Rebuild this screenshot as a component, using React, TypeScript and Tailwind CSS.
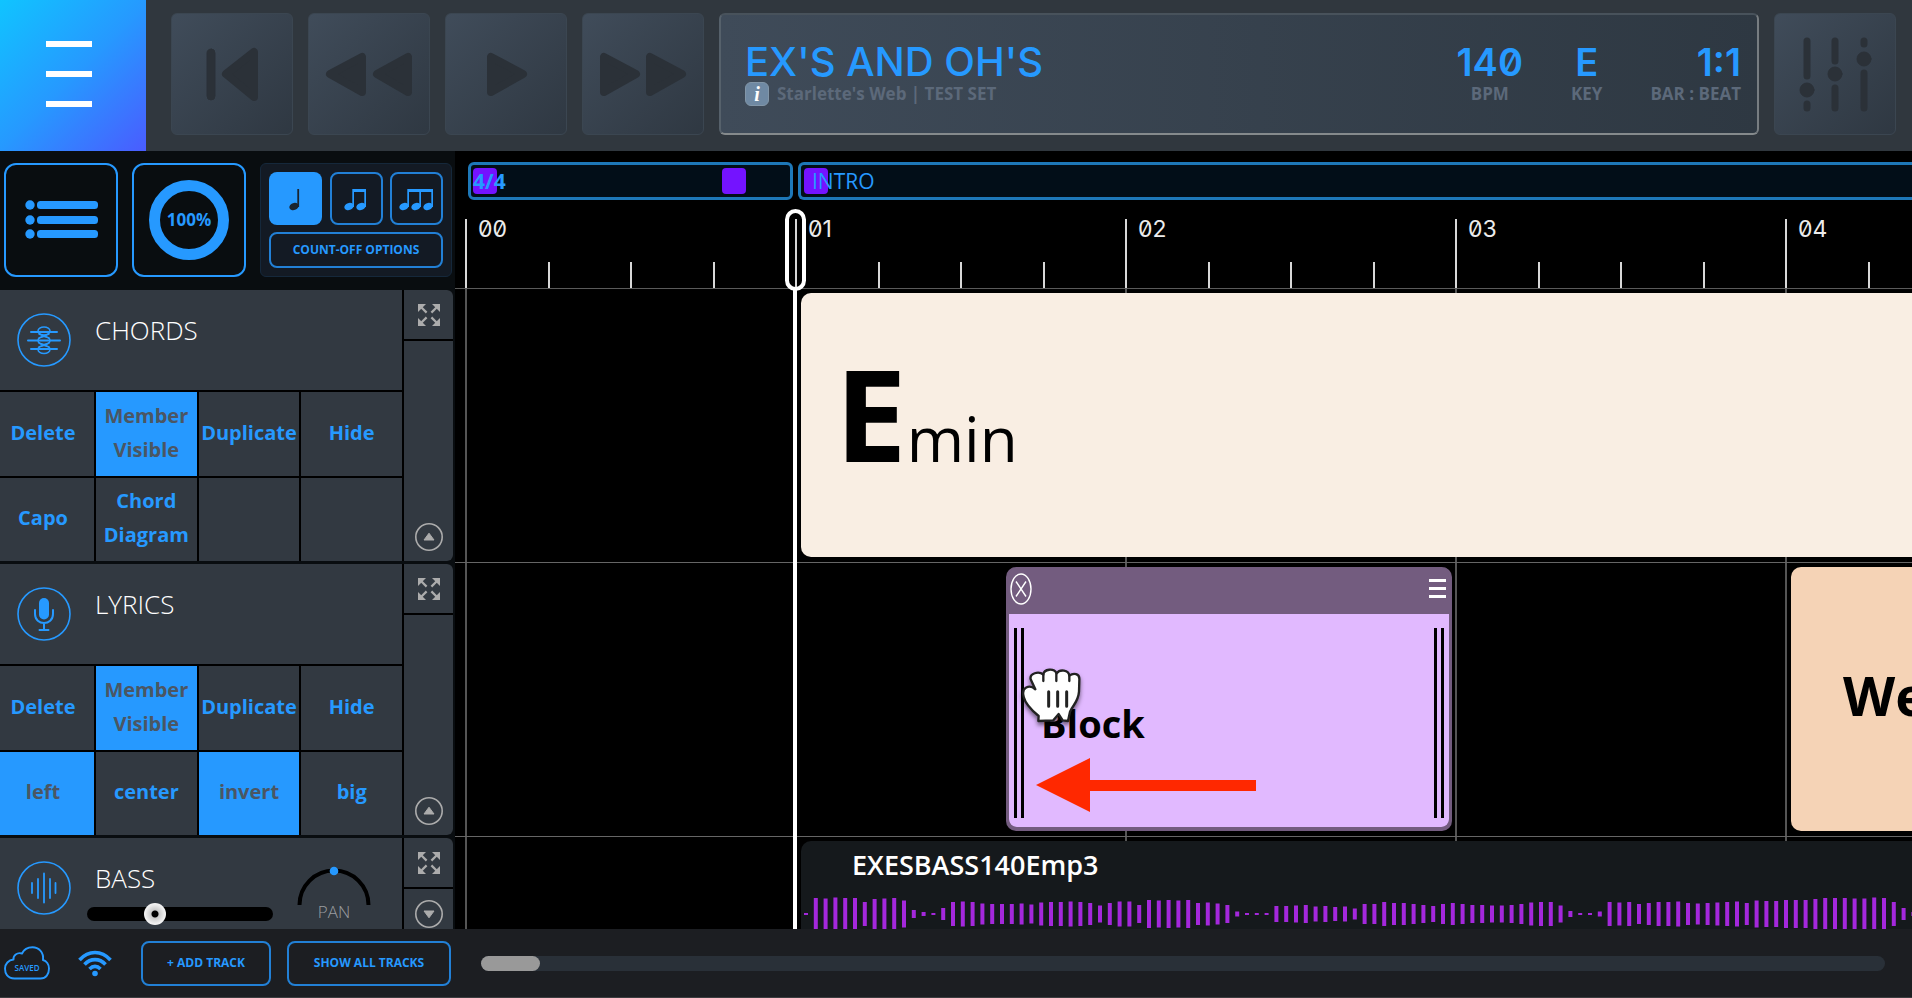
import type { ReactNode } from "react";

const BLUE = "#2699ff";

const wave = [
  2, 32, 31, 33, 32, 32, 24, 30, 31, 32, 27, 8, 4, 2, 12, 24, 25, 24, 21, 20, 20, 20, 21, 19, 23, 24, 24, 25, 24, 22,
  17, 22, 25, 25, 18, 28, 27, 28, 27, 28, 22, 23, 21, 18, 5, 2, 2, 2, 16, 16, 17, 18, 15, 16, 14, 15, 11, 20, 20, 24,
  22, 22, 20, 18, 16, 20, 22, 20, 18, 18, 17, 17, 18, 20, 23, 24, 24, 17, 6, 2, 2, 5, 24, 23, 24, 20, 22, 24, 24, 25,
  22, 21, 22, 23, 24, 25, 22, 27, 26, 26, 28, 28, 28, 30, 32, 32, 32, 31, 31, 33, 32, 24, 12, 4,
];

function TransportButton({ label, children }: { label: string; children: ReactNode }) {
  return (
    <button
      aria-label={label}
      className="size-[122px] shrink-0 rounded-md border border-[#3b4651] bg-linear-to-br from-[#404c5a] to-[#2f3842]"
    >
      <svg viewBox="1 1 120 120" className="size-full" fill="#2b3138" stroke="#2b3138" strokeLinejoin="round" strokeLinecap="round">
        {children}
      </svg>
    </button>
  );
}

function Header() {
  return (
    <header className="flex h-[151px] shrink-0 bg-[#30373e] pr-4">
      <button
        aria-label="Menu"
        className="flex h-full w-[146px] shrink-0 flex-col items-center justify-center gap-6 bg-linear-[135deg] from-[#10c4ff] via-[#2699ff] to-[#4a5cff] pr-2 pb-[3px]"
      >
        <span className="h-[6px] w-[46px] bg-white" />
        <span className="h-[6px] w-[46px] bg-white" />
        <span className="h-[6px] w-[46px] bg-white" />
      </button>
      <div className="flex min-w-0 flex-1 items-start pt-[13px] pl-[25px]">
        <div className="flex gap-[15px]">
          <TransportButton label="Back to start">
            <rect x="36" y="36" width="8" height="51" rx="4" />
            <path strokeWidth="8" d="M55 61 L83 39 V84 Z" />
          </TransportButton>
          <TransportButton label="Rewind">
            <path strokeWidth="8" d="M22 61 L54 44 V79 Z M69 61 L100 44 V79 Z" />
          </TransportButton>
          <TransportButton label="Play">
            <path strokeWidth="8" d="M78 61 L46 44 V79 Z" />
          </TransportButton>
          <TransportButton label="Fast forward">
            <path strokeWidth="8" d="M54 61 L22 44 V79 Z M100 61 L68 44 V79 Z" />
          </TransportButton>
        </div>
        <section className="mx-[15px] flex h-[122px] min-w-0 flex-1 items-center justify-between rounded-md border-2 border-t-[#48525b] border-r-[#777d81] border-b-[#858a8c] border-l-[#56616b] bg-linear-to-r from-[#3f4b59] to-[#2e3842] pr-4 pl-6">
          <div>
            <h1 className="font-['Inter'] text-[40px] leading-10 font-medium text-[#2699ff] slashed-zero">EX'S AND OH'S</h1>
            <div className="flex items-center gap-2">
              <span className="flex size-6 items-center justify-center rounded-md border border-[#8296a8] bg-[#6f89a3] font-['Liberation_Serif'] text-[20px] leading-5 font-bold text-white italic">
                i
              </span>
              <p className="text-[17px] leading-6 font-bold text-[#5c697a]">Starlette's Web | TEST SET</p>
            </div>
          </div>
          <dl className="flex gap-[48px] text-center">
            <Readout label="BPM" value="140" />
            <Readout label="KEY" value="E" />
            <Readout label="BAR : BEAT" value="1:1" end />
          </dl>
        </section>
        <TransportButton label="Mixer">
          <path
            strokeWidth="7"
            d="M33 28 V63 M33 91 V95 M61 28 V48 M61 75 V95 M90 28 V31 M90 60 V95"
          />
          <circle cx="33" cy="77" r="7" />
          <circle cx="61" cy="61" r="7" />
          <circle cx="90" cy="46" r="7" />
        </TransportButton>
      </div>
    </header>
  );
}

function Readout({ label, value, end }: { label: string; value: string; end?: boolean }) {
  return (
    <div className={end ? "flex flex-col-reverse text-right" : "flex flex-col-reverse"}>
      <dt className="text-[17px] leading-6 font-bold text-[#5c697a]">{label}</dt>
      <dd className="font-['Inter'] text-[38px] leading-10 font-semibold text-[#2699ff] slashed-zero">{value}</dd>
    </div>
  );
}

function Tools() {
  return (
    <div className="flex h-[139px] shrink-0 items-start gap-[14px] pt-3 pl-1">
      <button aria-label="Set list" className="size-[114px] rounded-xl border-2 border-[#2699ff]">
        <svg viewBox="2 2 110 110" className="size-full" fill={BLUE}>
          {[42, 57, 71].map((y) => (
            <g key={y}>
              <circle cx="26" cy={y} r="4.7" />
              <rect x="33" y={y - 4} width="61" height="8" rx="3.5" />
            </g>
          ))}
        </svg>
      </button>
      <button className="flex size-[114px] items-center justify-center rounded-xl border-2 border-[#2699ff]">
        <span className="flex size-20 items-center justify-center rounded-full border-[11px] border-[#2699ff] text-[17px] font-bold text-[#2699ff]">
          100%
        </span>
      </button>
      <div className="flex h-[114px] w-[192px] flex-col gap-[7px] rounded-md border border-[#15283b] bg-[#131a24] px-2 pt-2">
        <div className="flex justify-between">
          <button aria-label="Quarter notes" className="size-[53px] rounded-lg bg-[#2699ff]">
            <svg viewBox="0 0 53 53" className="size-full" fill="#1a2430">
              <NoteHead x={25} />
              <rect x="28.3" y="17" width="1.8" height="18" />
            </svg>
          </button>
          <button aria-label="Eighth notes" className="size-[53px] rounded-lg border-2 border-[#2280d6]">
            <svg viewBox="2 2 49 49" className="size-full" fill={BLUE}>
              <NoteHead x={19} />
              <NoteHead x={31} />
              <path d="M22.3 17 H36 V35 H34.3 V20 H24 V35 H22.3 Z" />
            </svg>
          </button>
          <button aria-label="Triplets" className="size-[53px] rounded-lg border-2 border-[#2280d6]">
            <svg viewBox="2 2 49 49" className="size-full" fill={BLUE}>
              <NoteHead x={14} />
              <NoteHead x={26} />
              <NoteHead x={38} />
              <path d="M17.3 17 H43 V35 H41.3 V20 H31 V35 H29.3 V20 H19 V35 H17.3 Z" />
            </svg>
          </button>
        </div>
        <button className="h-9 rounded-lg border-2 border-[#2280d6] text-[12px] font-bold text-[#2699ff]">COUNT-OFF OPTIONS</button>
      </div>
    </div>
  );
}

function NoteHead({ x }: { x: number }) {
  return <ellipse cx={x} cy="34.5" rx="4.8" ry="3.5" transform={`rotate(-18 ${x} 34.5)`} />;
}

function ExpandButton() {
  return (
    <button aria-label="Expand track" className="flex h-[49px] shrink-0 items-center justify-center bg-[#323941]">
      <svg viewBox="0 0 22 22" className="size-[22px]" fill="#acacac" stroke="#acacac">
        {[0, 90, 180, 270].map((a) => (
          <g key={a} transform={`rotate(${a} 11 11)`}>
            <path stroke="none" d="M0 0 H8 L0 8 Z" />
            <path strokeWidth="2.2" d="M3 3 L8.6 8.6" />
          </g>
        ))}
      </svg>
    </button>
  );
}

function CollapseButton({ down }: { down?: boolean }) {
  return (
    <button aria-label={down ? "Open track" : "Close track"} className="flex items-center justify-center">
      <svg viewBox="0 0 28 28" className={down ? "size-7 rotate-180" : "size-7"} fill="none" stroke="#acacac">
        <circle cx="14" cy="14" r="13.2" strokeWidth="1.6" />
        <path fill="#acacac" strokeWidth="1" strokeLinejoin="round" d="M14 10.2 L19 17 H9 Z" />
      </svg>
    </button>
  );
}

function TrackIcon({ children }: { children: ReactNode }) {
  return (
    <svg viewBox="0 0 54 54" className="size-[54px] shrink-0" fill="none" stroke={BLUE} strokeLinecap="round">
      <circle cx="27" cy="27" r="26" strokeWidth="1.6" />
      {children}
    </svg>
  );
}

type Cell = { label: string; on?: boolean };

function Track({ name, icon, cells, controls }: { name: string; icon: ReactNode; cells: Cell[]; controls?: ReactNode }) {
  return (
    <section className="flex h-[271px] shrink-0 gap-[2px] overflow-hidden rounded-r-md bg-black">
      <div className="grid min-w-0 flex-1 grid-cols-[94px_1fr_1fr_1fr] grid-rows-[100px_1fr_1fr] gap-[2px]">
        <div className="col-span-4 flex gap-6 bg-[#323941] pl-[17px]">
          <div className="pt-[23px]">
            <TrackIcon>{icon}</TrackIcon>
          </div>
          <div className="min-w-0 flex-1 pt-6">
            <h2 className="text-[26px] leading-8 font-light text-white">{name}</h2>
            {controls}
          </div>
        </div>
        {cells.map((c, i) =>
          c.label ? (
            <button
              key={i}
              className={
                c.on
                  ? "bg-[#2699ff] pb-[2px] text-[20px] leading-[34px] font-bold text-[#4b5663] nth-[4n+2]:pr-2"
                  : "bg-[#323941] pb-[2px] text-[20px] leading-[34px] font-bold text-[#2699ff] nth-[4n+2]:pr-2"
              }
            >
              {c.label}
            </button>
          ) : (
            <div key={i} className="bg-[#323941]" />
          ),
        )}
      </div>
      <div className="flex w-[49px] flex-col gap-[2px]">
        <ExpandButton />
        <div className={controls ? "flex flex-1 items-start justify-center bg-[#323941] pt-[11px]" : "flex flex-1 items-end justify-center bg-[#323941] pb-[10px]"}>
          <CollapseButton down={!!controls} />
        </div>
      </div>
    </section>
  );
}

const chordCells: Cell[] = [
  { label: "Delete" },
  { label: "Member Visible", on: true },
  { label: "Duplicate" },
  { label: "Hide" },
  { label: "Capo" },
  { label: "Chord Diagram" },
  { label: "" },
  { label: "" },
];

const lyricCells: Cell[] = [
  { label: "Delete" },
  { label: "Member Visible", on: true },
  { label: "Duplicate" },
  { label: "Hide" },
  { label: "left", on: true },
  { label: "center" },
  { label: "invert", on: true },
  { label: "big" },
];

const emptyCells: Cell[] = Array.from({ length: 8 }, () => ({ label: "" }));

function Sidebar() {
  return (
    <aside className="flex w-[455px] shrink-0 flex-col overflow-hidden bg-[#090d10]">
      <Tools />
      <div className="flex flex-col gap-[3px] pr-[2px]">
        <Track
          name="CHORDS"
          cells={chordCells}
          icon={
            <g strokeWidth="2">
              <path d="M14 19 H40 M11 27.5 H43 M14 36 H40" />
              <ellipse cx="27" cy="18" rx="6" ry="4" strokeWidth="1.5" />
              <ellipse cx="27" cy="27.5" rx="6" ry="4" strokeWidth="1.5" />
              <ellipse cx="27" cy="36.5" rx="6" ry="4" strokeWidth="1.5" />
              <path strokeWidth="1.5" d="M22 21 L32 25 M32 21 L22 25 M22 30 L32 34 M32 30 L22 34" />
            </g>
          }
        />
        <Track
          name="LYRICS"
          cells={lyricCells}
          icon={
            <>
              <rect x="22" y="11" width="10" height="21.5" rx="5" fill={BLUE} stroke="none" />
              <path strokeWidth="2" d="M18 23 V27 C18 39 36 39 36 27 V23 M27 36 V42.5 M22.5 43 H31.5" />
            </>
          }
        />
        <Track
          name="BASS"
          cells={emptyCells}
          icon={<path strokeWidth="1.8" d="M15 22 V32 M21 18 V37 M27 12.5 V41.5 M33 18 V37 M38.5 22 V32" />}
          controls={
            <div className="flex gap-6">
              <input
                type="range"
                aria-label="Volume"
                defaultValue={35}
                className="mt-[13px] -ml-2 h-[14px] w-[186px] appearance-none rounded-full bg-black [&::-webkit-slider-thumb]:size-[22px] [&::-webkit-slider-thumb]:appearance-none [&::-webkit-slider-thumb]:rounded-full [&::-webkit-slider-thumb]:bg-[radial-gradient(circle,#000_3px,#c9c9c9_4px,#f2f2f2_10px)]"
              />
              <div className="-mt-7 flex flex-col items-center">
                <svg viewBox="0 0 74 40" className="h-10 w-[74px]" fill="none">
                  <path stroke="#000" strokeWidth="4" d="M2.5 39 A34.5 34.5 0 0 1 71.500 39" />
                  <circle cx="37" cy="5" r="4.3" fill={BLUE} />
                </svg>
                <span className="-mt-1 text-[17px] leading-5 font-light text-[#9a9da0]">PAN</span>
              </div>
            </div>
          }
        />
      </div>
    </aside>
  );
}

const bars = ["00", "01", "02", "03", "04"];

function Timeline() {
  return (
    <main className="relative flex min-w-0 flex-1 flex-col overflow-hidden bg-black">
      <div className="flex shrink-0 gap-[5px] pt-[11px] pl-[13px]">
        <div className="relative flex h-[38px] w-[325px] shrink-0 items-center rounded-md border-3 border-[#1e78b8] bg-[#020e18]">
          <span className="absolute left-[2px] h-[26px] w-6 rounded-[4px] bg-[#7413ff]" />
          <span className="absolute right-[44px] h-[26px] w-6 rounded-[4px] bg-[#7413ff]" />
          <span className="relative pl-[2px] text-[21px] leading-6 font-bold text-[#2699ff]">4/4</span>
        </div>
        <div className="relative flex h-[38px] flex-1 items-center rounded-l-md border-y-3 border-l-3 border-[#1e78b8] bg-[#020e18]">
          <span className="absolute left-[3px] h-[26px] w-6 rounded-[4px] bg-[#7413ff]" />
          <span className="relative pl-[11px] text-[21px] leading-6 text-[#2699ff]">INTRO</span>
        </div>
      </div>
      <div className="flex shrink-0 border-b border-[#5a5a5a] pt-[19px] pl-[10px]">
        {bars.map((b) => (
          <div key={b} className="grid h-[69px] w-[330px] shrink-0 grid-cols-4 items-end">
            <span className="h-full border-l-2 border-[#d8d8d8] pl-[11px] font-['Inter'] text-[23px] leading-5 text-[#ececec] slashed-zero">
              {b}
            </span>
            <span className="h-[26px] border-l-2 border-[#d8d8d8]" />
            <span className="h-[26px] border-l-2 border-[#d8d8d8]" />
            <span className="h-[26px] border-l-2 border-[#d8d8d8]" />
          </div>
        ))}
      </div>
      <div className="relative flex-1">
        <div className="absolute inset-0 flex overflow-hidden pl-[10px]">
          {bars.map((b) => (
            <div key={b} className="w-[330px] shrink-0 border-l-2 border-[#555]" />
          ))}
        </div>
        <div className="relative flex h-[274px] border-b border-[#666] pt-1 pl-[346px]">
          <article className="flex h-[264px] flex-1 items-baseline rounded-l-[10px] bg-[#f9eee3] pt-[33px] pl-[34px] text-black">
            <span className="text-[128px] leading-[174px] font-bold">E</span>
            <span className="text-[62px]">min</span>
          </article>
        </div>
        <div className="relative flex h-[274px] border-b border-[#666] pt-1 pl-[551px]">
          <article className="flex h-[264px] w-[446px] flex-col overflow-hidden rounded-[10px] border-x-3 border-b-4 border-[#735c7f] bg-[#735c7f]">
            <div className="flex h-[47px] shrink-0 items-center justify-between pr-[3px] pb-1 pl-px">
              <button aria-label="Remove block">
                <svg viewBox="0 0 22 32" className="h-8 w-[22px]" fill="none" stroke="#fff" strokeWidth="1.4">
                  <ellipse cx="11" cy="16" rx="10" ry="15" />
                  <path d="M6 8.500 L16 23.500 M16 8.500 L6 23.500" />
                </svg>
              </button>
              <button aria-label="Block menu" className="flex w-[17px] flex-col gap-[5px]">
                <span className="h-[3px] bg-white" />
                <span className="h-[3px] bg-white" />
                <span className="h-[3px] bg-white" />
              </button>
            </div>
            <div className="flex flex-1 items-center justify-between rounded-b-[8px] bg-[#e1b9ff] px-[5px] pt-1">
              <div className="h-[190px] w-[10px] border-x-3 border-black" />
              <p className="flex-1 pl-[17px] text-[38px] leading-[54px] font-bold text-black">Block</p>
              <div className="h-[190px] w-[10px] border-x-3 border-black" />
            </div>
          </article>
          <article className="ml-[339px] flex h-[264px] min-w-0 flex-1 items-center overflow-hidden rounded-l-[10px] bg-[#f5d3b6] pb-2 pl-[52px]">
            <p className="text-[54px] font-bold text-black">We</p>
          </article>
          <svg viewBox="0 0 220 54" className="absolute top-[195px] left-[581px] h-[54px] w-[220px]" fill="#ff2800">
            <path d="M0 27 L54 0 V22 H220 V33 H54 V54 Z" />
          </svg>
          <svg
            viewBox="120 345 189 180"
            className="absolute top-[102px] left-[565px] h-[60px] w-[63px] overflow-visible drop-shadow-[0_3px_2px_rgba(0,0,0,0.5)]"
            fill="#fff"
            stroke="#222"
            strokeWidth="7"
            strokeLinejoin="round"
            strokeLinecap="round"
          >
            <path d="M166 418 L152 388 C148 370 176 362 190 374 C192 356 222 354 230 370 C240 356 266 360 268 377 C280 368 300 370 298 390 L297 425 C295 455 279 465 270 485 L264 513 L248 511 L236 492 L220 511 L175 513 L176 498 C152 478 136 462 131 440 C123 412 148 402 166 418 Z" />
            <path fill="none" d="M190 374 V393 M229 370 V393 M268 377 V393" />
            <path fill="none" strokeWidth="9" d="M206 425 V469 M233 425 V469 M260 425 V469" />
          </svg>
        </div>
        <div className="relative flex h-[274px] pt-1 pl-[346px]">
          <article className="h-[264px] min-w-0 flex-1 overflow-hidden rounded-l-[10px] bg-[#15191c]">
            <h3 className="pt-2 pl-[51px] text-[27px] leading-8 font-semibold text-white">EXESBASS140Emp3</h3>
            <svg viewBox="0 0 1111 40" className="mt-[13px] h-10 w-[1111px]" fill="#a428dc">
              {wave.map((h, i) => (
                <rect key={i} x={3 + i * 9.8} y={20 - h / 2} width="4" height={h} />
              ))}
            </svg>
          </article>
        </div>
      </div>
      <div className="absolute top-[138px] bottom-0 left-[338px] w-1 bg-white" />
      <div className="absolute top-[58px] left-[330px] h-[82px] w-[21px] rounded-full border-4 border-white" />
    </main>
  );
}

function Footer() {
  return (
    <footer className="flex h-[69px] shrink-0 items-center border-b border-[#3c3d40] bg-[#1c1e22] pr-[27px] pl-1">
      <svg viewBox="0 0 46 34" className="h-[34px] w-[46px]" fill="none" stroke={BLUE} strokeWidth="1.9" strokeLinejoin="round">
        <path d="M10.500 32.500 C3 32.500 1 27 1 22.500 C1 18 4.500 14 9.500 13.500 C9 9.500 13 6 18 7.500 C20 3 24 1.200 28.500 1.200 C34.500 1.200 40 6 39 14 C42.500 15 45 18.500 45 22.500 C45 28 42 32.500 36.500 32.500 Z" />
        <text x="23" y="25" fill={BLUE} stroke="none" fontSize="8" fontWeight="600" textAnchor="middle">
          SAVED
        </text>
      </svg>
      <svg viewBox="0 0 34 27" className="mr-[29px] ml-7 h-[27px] w-[34px]" fill="none" stroke={BLUE} strokeWidth="3.600">
        <path d="M1.500 10 C10.500 0 23.500 0 32.500 10" />
        <path d="M6.500 14.500 C12.500 8 21.500 8 27.500 14.500" />
        <path d="M11.500 19 C15 15.500 19 15.500 22.500 19" />
        <circle cx="17" cy="23.500" r="2.800" fill={BLUE} stroke="none" />
      </svg>
      <button className="h-[45px] w-[130px] shrink-0 rounded-lg border-2 border-[#2280d6] text-[12px] font-bold text-[#2699ff]">+ ADD TRACK</button>
      <button className="ml-4 h-[45px] w-[164px] shrink-0 rounded-lg border-2 border-[#2280d6] text-[12px] font-bold text-[#2699ff]">
        SHOW ALL TRACKS
      </button>
      <div className="ml-[30px] h-[15px] flex-1 rounded-full bg-[#293038]">
        <div className="h-full w-[59px] rounded-full bg-[#999]" />
      </div>
    </footer>
  );
}

export default function App() {
  return (
    <div className="flex h-screen flex-col overflow-hidden bg-black font-['Open_Sans','Noto_Sans',sans-serif]">
      <Header />
      <div className="flex min-h-0 flex-1">
        <Sidebar />
        <Timeline />
      </div>
      <Footer />
    </div>
  );
}
